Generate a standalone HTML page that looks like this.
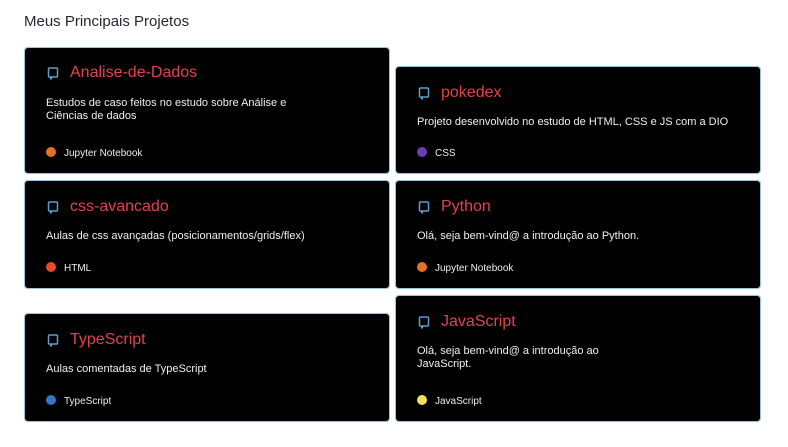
<!DOCTYPE html>
<html><head><meta charset="utf-8"><style>
*{margin:0;padding:0;box-sizing:border-box}
body{width:788px;height:447px;background:#fff;font-family:"Liberation Sans",sans-serif;position:relative;overflow:hidden}
h1{position:absolute;left:24px;top:13px;font-size:15px;font-weight:normal;color:#24292f}
.c{position:absolute;background:#000;border:1px solid #9fc3d6;border-radius:4px;box-shadow:0 0 1px #cde}
.c>*{position:absolute;white-space:nowrap}
.t{left:45px;font-size:16px;color:#e0434f;line-height:20px}
.i{left:22px;width:12px;height:13px}
.d{left:21px;font-size:11px;color:#f0f0f0;line-height:13px}
.l{left:21px;font-size:10px;color:#eee;line-height:12px}
.l b{display:inline-block;width:10px;height:10px;border-radius:50%;margin-right:8px;vertical-align:-1px}
</style></head><body>
<h1>Meus Principais Projetos</h1>

<div class="c" style="left:24px;top:47px;width:366px;height:127px">
<svg class="i" style="top:19px" viewBox="0 0 12 13"><rect x="1.5" y="1" width="9" height="9" rx="1" fill="none" stroke="#5aa0c8" stroke-width="1.5"/><rect x="3" y="10" width="2" height="2.5" fill="#5aa0c8"/></svg>
<div class="t" style="top:15px">Analise-de-Dados</div>
<div class="d" style="top:49px">Estudos de caso feitos no estudo sobre Análise e<br>Ciências de dados</div>
<div class="l" style="top:99px"><b style="background:#e5702a"></b>Jupyter Notebook</div>
</div>

<div class="c" style="left:395px;top:66px;width:366px;height:108px">
<svg class="i" style="top:20px" viewBox="0 0 12 13"><rect x="1.5" y="1" width="9" height="9" rx="1" fill="none" stroke="#5aa0c8" stroke-width="1.5"/><rect x="3" y="10" width="2" height="2.5" fill="#5aa0c8"/></svg>
<div class="t" style="top:16px">pokedex</div>
<div class="d" style="top:49px">Projeto desenvolvido no estudo de HTML, CSS e JS com a DIO</div>
<div class="l" style="top:80px"><b style="background:#6b3fb0"></b>CSS</div>
</div>

<div class="c" style="left:24px;top:180px;width:366px;height:109px">
<svg class="i" style="top:20px" viewBox="0 0 12 13"><rect x="1.5" y="1" width="9" height="9" rx="1" fill="none" stroke="#5aa0c8" stroke-width="1.5"/><rect x="3" y="10" width="2" height="2.5" fill="#5aa0c8"/></svg>
<div class="t" style="top:16px">css-avancado</div>
<div class="d" style="top:49px">Aulas de css avançadas (posicionamentos/grids/flex)</div>
<div class="l" style="top:81px"><b style="background:#e34c26"></b>HTML</div>
</div>

<div class="c" style="left:395px;top:180px;width:366px;height:109px">
<svg class="i" style="top:20px" viewBox="0 0 12 13"><rect x="1.5" y="1" width="9" height="9" rx="1" fill="none" stroke="#5aa0c8" stroke-width="1.5"/><rect x="3" y="10" width="2" height="2.5" fill="#5aa0c8"/></svg>
<div class="t" style="top:16px">Python</div>
<div class="d" style="top:49px">Olá, seja bem-vind@ a introdução ao Python.</div>
<div class="l" style="top:81px"><b style="background:#e5702a"></b>Jupyter Notebook</div>
</div>

<div class="c" style="left:24px;top:313px;width:366px;height:109px">
<svg class="i" style="top:20px" viewBox="0 0 12 13"><rect x="1.5" y="1" width="9" height="9" rx="1" fill="none" stroke="#5aa0c8" stroke-width="1.5"/><rect x="3" y="10" width="2" height="2.5" fill="#5aa0c8"/></svg>
<div class="t" style="top:16px">TypeScript</div>
<div class="d" style="top:49px">Aulas comentadas de TypeScript</div>
<div class="l" style="top:81px"><b style="background:#3178c6"></b>TypeScript</div>
</div>

<div class="c" style="left:395px;top:295px;width:366px;height:127px">
<svg class="i" style="top:20px" viewBox="0 0 12 13"><rect x="1.5" y="1" width="9" height="9" rx="1" fill="none" stroke="#5aa0c8" stroke-width="1.5"/><rect x="3" y="10" width="2" height="2.5" fill="#5aa0c8"/></svg>
<div class="t" style="top:16px">JavaScript</div>
<div class="d" style="top:49px">Olá, seja bem-vind@ a introdução ao<br>JavaScript.</div>
<div class="l" style="top:99px"><b style="background:#f1e05a"></b>JavaScript</div>
</div>
</body></html>
